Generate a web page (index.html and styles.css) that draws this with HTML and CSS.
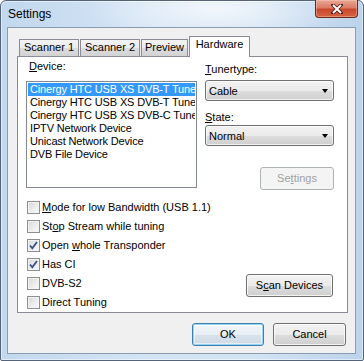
FILE: index.html
```html
<!DOCTYPE html>
<html lang="en">
<head>
    <meta charset="UTF-8">
    <meta name="viewport" content="width=device-width, initial-scale=1.0">
    <title>Settings</title>
    <link rel="stylesheet" href="styles.css">
</head>
<body>
    <div class="window">
        <div class="titlebar">
            <span class="title">Settings</span>
            <div class="close-btn">
                <svg width="12" height="10" viewBox="0 0 12 10">
                    <path d="M2 1 L10 9 M10 1 L2 9" stroke="#4b1a12" stroke-width="3.6" stroke-linecap="square"/>
                    <path d="M2 1 L10 9 M10 1 L2 9" stroke="#fff" stroke-width="2"/>
                </svg>
            </div>
        </div>

        <div class="client">
            <div class="tabs">
                <div class="tab tab-scan1">Scanner 1</div>
                <div class="tab tab-scan2">Scanner 2</div>
                <div class="tab tab-preview">Preview</div>
                <div class="tab tab-hw active">Hardware</div>
            </div>

            <div class="page">
                <div class="top">
                    <div class="device-col">
                        <div class="lbl device-lbl"><u>D</u>evice:</div>
                        <ul class="listbox">
                            <li class="selected">Cinergy HTC USB XS DVB-T Tuner</li>
                            <li>Cinergy HTC USB XS DVB-T Tuner</li>
                            <li>Cinergy HTC USB XS DVB-C Tuner</li>
                            <li>IPTV Network Device</li>
                            <li>Unicast Network Device</li>
                            <li>DVB File Device</li>
                        </ul>
                    </div>
                    <div class="side-col">
                        <div class="lbl"><u>T</u>unertype:</div>
                        <div class="combo"><span>Cable</span><i class="arrow"></i></div>
                        <div class="lbl state-lbl"><u>S</u>tate:</div>
                        <div class="combo combo-state"><span>Normal</span><i class="arrow"></i></div>
                        <div class="btn btn-disabled btn-settings">Se<u>t</u>tings</div>
                    </div>
                </div>

                <div class="bottom">
                    <div class="checks">
                        <div class="check"><span class="box"></span><span class="check-text"><u>M</u>ode for low Bandwidth (USB 1.1)</span></div>
                        <div class="check"><span class="box"></span><span class="check-text">St<u>o</u>p Stream while tuning</span></div>
                        <div class="check"><span class="box"><svg width="11" height="11" viewBox="0 0 11 11"><path d="M2 5.5 L4.3 8.3 L9 2" fill="none" stroke="#3b4f8c" stroke-width="1.8"/></svg></span><span class="check-text">Open <u>w</u>hole Transponder</span></div>
                        <div class="check"><span class="box"><svg width="11" height="11" viewBox="0 0 11 11"><path d="M2 5.5 L4.3 8.3 L9 2" fill="none" stroke="#3b4f8c" stroke-width="1.8"/></svg></span><span class="check-text">Has CI</span></div>
                        <div class="check"><span class="box"></span><span class="check-text">DVB-S2</span></div>
                        <div class="check"><span class="box"></span><span class="check-text">Direct Tuning</span></div>
                    </div>
                    <div class="btn btn-scan">S<u>c</u>an Devices</div>
                </div>
            </div>

            <div class="actions">
                <div class="btn btn-default btn-ok">OK</div>
                <div class="btn btn-cancel">Cancel</div>
            </div>
        </div>
    </div>
</body>
</html>
```

FILE: styles.css
```css
body {
    margin: 0;
    font-family: "Liberation Sans", Arial, sans-serif;
    font-size: 11px;
    color: #000;
    background: #fff;
}
u {
    text-decoration: underline;
    text-underline-offset: 1px;
}

/* window frame */
.window {
    box-sizing: border-box;
    width: 364px;
    height: 361px;
    border: 1px solid #56647a;
    border-radius: 6px 6px 2px 2px;
    padding: 0 7px 6px 6px;
    display: flex;
    flex-direction: column;
    background:
        radial-gradient(ellipse 130px 32px at 215px 8px, rgba(255,255,255,0.7), rgba(255,255,255,0) 100%),
        linear-gradient(to right, #c2d8ee 0%, #d4e4f5 40%, #d2e3f4 70%, #bcd3eb 100%);
    box-shadow: inset 0 0 0 1px rgba(255,255,255,0.5);
}
.titlebar {
    height: 26px;
    display: flex;
    align-items: flex-start;
}
.title {
    margin: 6px 0 0 1px;
    font-size: 12px;
    line-height: 14px;
    color: #000;
}
.close-btn {
    box-sizing: border-box;
    width: 43px;
    height: 18px;
    margin: -1px -2px 0 auto;
    border: 1px solid #6b2a1e;
    border-top: none;
    border-radius: 0 0 4px 4px;
    background: linear-gradient(#eaa796 0%, #dc7c66 45%, #c9472d 55%, #d6643f 100%);
    box-shadow: inset 0 0 0 1px rgba(255,220,210,0.35);
    display: flex;
    align-items: center;
    justify-content: center;
}
.close-btn svg {
    display: block;
}

/* client area */
.client {
    flex: 1;
    border: 1px solid #8a9cb0;
    background: #f0f0f0;
    padding: 8px 7px 7px 9px;
    display: flex;
    flex-direction: column;
}

/* tabs */
.tabs {
    display: flex;
    align-items: flex-end;
    height: 20px;
    padding-left: 2px;
    position: relative;
    z-index: 1;
}
.tab {
    box-sizing: border-box;
    height: 17px;
    border: 1px solid #898c95;
    border-bottom: none;
    background: linear-gradient(#f3f3f3 0%, #ebebeb 50%, #dcdcdc 51%, #d3d3d3 100%);
    text-align: center;
    padding-top: 1px;
    line-height: 13px;
    margin-right: 1px;
}
.tab-scan1 { width: 60px; }
.tab-scan2 { width: 60px; }
.tab-preview { width: 47px; }
.tab-hw { width: 61px; }
.tab.active {
    height: 21px;
    margin-bottom: -1px;
    background: #fff;
}

.page {
    flex: 1;
    box-sizing: border-box;
    border: 1px solid #898c95;
    background: #fff;
    display: flex;
    flex-direction: column;
}

.top {
    display: flex;
    padding-left: 8px;
}
.lbl {
    line-height: 13px;
    white-space: nowrap;
}
.device-col {
    width: 171px;
}
.device-lbl {
    margin-top: 3px;
    padding-left: 3px;
}
.listbox {
    box-sizing: border-box;
    list-style: none;
    margin: 8px 0 0;
    padding: 1px;
    width: 171px;
    height: 107px;
    border: 1px solid #828790;
    overflow: hidden;
}
.listbox li {
    line-height: 13px;
    padding-left: 2px;
    white-space: nowrap;
    overflow: hidden;
    letter-spacing: -0.15px;
}
.listbox li.selected {
    background: #3399ff;
    color: #fff;
}

.side-col {
    width: 129px;
    margin-left: 8px;
    padding-top: 6px;
    display: flex;
    flex-direction: column;
}
.combo {
    box-sizing: border-box;
    height: 21px;
    margin-top: 4px;
    border: 1px solid #707070;
    border-radius: 3px;
    background: linear-gradient(#f2f2f2 0%, #ebebeb 50%, #dddddd 51%, #cfcfcf 100%);
    box-shadow: inset 0 0 0 1px rgba(255,255,255,0.7);
    padding: 4px 5px 0 3px;
    line-height: 13px;
    display: flex;
    justify-content: space-between;
}
.combo .arrow {
    width: 0;
    height: 0;
    margin-top: 4px;
    border-left: 3.5px solid transparent;
    border-right: 3.5px solid transparent;
    border-top: 4px solid #000;
}
.state-lbl {
    margin-top: 10px;
}
.combo-state {
    margin-top: 1px;
}

/* buttons */
.btn {
    box-sizing: border-box;
    height: 23px;
    border: 1px solid #707070;
    border-radius: 3px;
    background: linear-gradient(#f2f2f2 0%, #ebebeb 50%, #dddddd 51%, #cfcfcf 100%);
    box-shadow: inset 0 0 0 1px rgba(255,255,255,0.75);
    text-align: center;
    line-height: 21px;
    white-space: nowrap;
}
.btn-disabled {
    border-color: #adb2b5;
    background: #f4f4f4;
    color: #a0a0a0;
    box-shadow: none;
}
.btn-settings {
    width: 74px;
    margin-top: 21px;
    align-self: flex-end;
}
.btn-default {
    border-color: #3c7fb1;
    background: linear-gradient(#f2f6fa 0%, #e8eef4 50%, #d8e2ec 51%, #cfdae6 100%);
    box-shadow: inset 0 0 0 1px #97d5f2, inset 0 0 0 2px rgba(255,255,255,0.5);
}

.bottom {
    display: flex;
    align-items: flex-start;
}
.checks {
    margin-top: 11px;
    padding-left: 9px;
    display: flex;
    flex-direction: column;
    gap: 6px;
}
.check {
    display: flex;
    align-items: center;
    line-height: 13px;
    white-space: nowrap;
}
.box {
    box-sizing: border-box;
    width: 13px;
    height: 13px;
    margin-right: 2px;
    border: 1px solid #8e8f8f;
    background: linear-gradient(135deg, #d6d8dc 0%, #eeeeee 60%, #fafafa 100%);
    box-shadow: inset 0 0 0 1px #f3f3f3;
    display: flex;
    align-items: center;
    justify-content: center;
}
.box svg {
    display: block;
}
.btn-scan {
    width: 87px;
    margin: 84px 14px 0 auto;
}

.actions {
    display: flex;
    justify-content: flex-end;
    gap: 9px;
    margin-top: 10px;
    padding-right: 2px;
}
.btn-ok {
    width: 72px;
}
.btn-cancel {
    width: 73px;
}
```
